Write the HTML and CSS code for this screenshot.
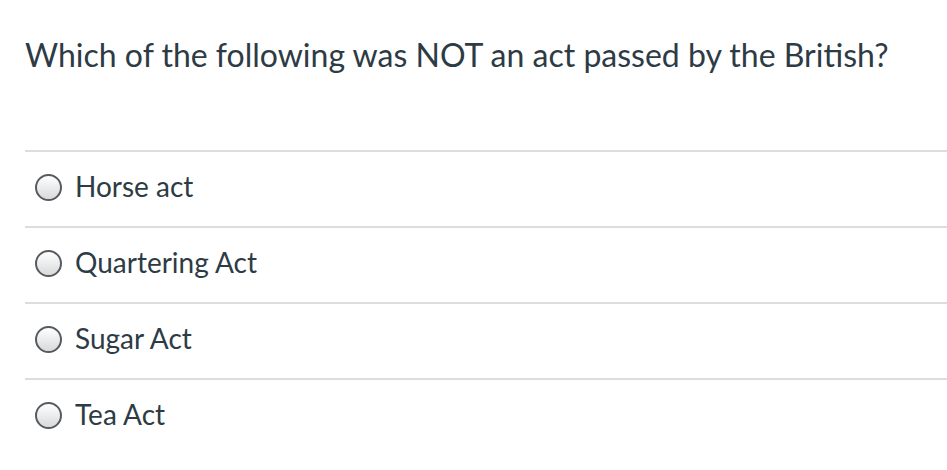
FILE: index.html
```html
<!DOCTYPE html>
<html>
<head>
<meta charset="utf-8">
<link rel="stylesheet" href="styles.css">
</head>
<body>
<div class="question">
  <div class="question-text">Which of the following was NOT an act passed by the British?</div>
  <div class="answers">
    <label class="answer"><span class="radio"></span><span class="label">Horse act</span></label>
    <label class="answer"><span class="radio"></span><span class="label">Quartering Act</span></label>
    <label class="answer"><span class="radio"></span><span class="label">Sugar Act</span></label>
    <label class="answer"><span class="radio"></span><span class="label">Tea Act</span></label>
  </div>
</div>
</body>
</html>
```
FILE: styles.css
```css
html, body {
  margin: 0;
  padding: 0;
  background: #ffffff;
}
body {
  font-family: Lato, "Liberation Sans", sans-serif;
  color: #2d3b45;
}
.question {
  padding: 34px 0 0 25px;
}
.question-text {
  font-size: 32px;
  line-height: 42px;
  height: 116px;
}
.answers {
  display: flex;
  flex-direction: column;
}
.answer {
  display: flex;
  align-items: center;
  gap: 13px;
  height: 74px;
  border-top: 2px solid #dddddd;
  padding-left: 10px;
}
.radio {
  width: 23px;
  height: 23px;
  border: 2px solid #555b60;
  border-radius: 50%;
  background: linear-gradient(#ffffff, #d9d9d9);
  flex: none;
  margin-bottom: 4px;
}
.label {
  font-size: 28px;
  line-height: 30px;
  margin-bottom: 6px;
}
```
